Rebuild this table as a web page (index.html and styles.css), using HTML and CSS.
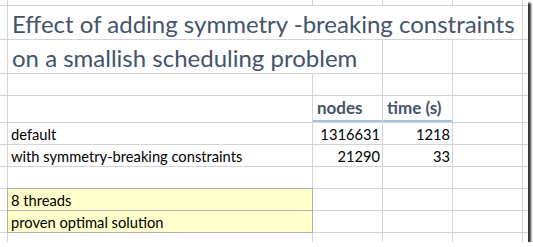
FILE: index.html
```html
<!DOCTYPE html>
<html>
<head>
<meta charset="utf-8">
<link rel="stylesheet" href="styles.css">
</head>
<body>
<div class="sheet">
  <!-- row 0 -->
  <div class="c"></div><div class="c"></div><div class="c"></div><div class="c"></div><div class="c"></div><div class="c"></div>
  <!-- row 1 -->
  <div class="c"></div><div class="c title span4">Effect of adding symmetry -breaking constraints</div><div class="c"></div>
  <!-- row 2 -->
  <div class="c"></div><div class="c title span2">on a smallish scheduling problem</div><div class="c"></div><div class="c"></div><div class="c"></div>
  <!-- row 3 -->
  <div class="c"></div><div class="c"></div><div class="c"></div><div class="c"></div><div class="c"></div><div class="c"></div>
  <!-- row 4 -->
  <div class="c"></div><div class="c"></div><div class="c head">nodes</div><div class="c head">time (s)</div><div class="c"></div><div class="c"></div>
  <!-- row 5 -->
  <div class="c"></div><div class="c txt">default</div><div class="c num">1316631</div><div class="c num">1218</div><div class="c"></div><div class="c"></div>
  <!-- row 6 -->
  <div class="c"></div><div class="c txt">with symmetry-breaking constraints</div><div class="c num">21290</div><div class="c num">33</div><div class="c"></div><div class="c"></div>
  <!-- row 7 -->
  <div class="c"></div><div class="c"></div><div class="c"></div><div class="c"></div><div class="c"></div><div class="c"></div>
  <!-- row 8 -->
  <div class="c"></div><div class="c txt note">8 threads</div><div class="c"></div><div class="c"></div><div class="c"></div><div class="c"></div>
  <!-- row 9 -->
  <div class="c"></div><div class="c txt note">proven optimal solution</div><div class="c"></div><div class="c"></div><div class="c"></div><div class="c"></div>
  <!-- row 10 -->
  <div class="c"></div><div class="c"></div><div class="c"></div><div class="c"></div><div class="c"></div><div class="c"></div>
</div>
</body>
</html>
```
FILE: styles.css
```css
html, body {
  margin: 0;
  padding: 0;
  background: #ffffff;
}

.sheet {
  width: 528px;
  height: 242px;
  display: grid;
  grid-template-columns: 7px 304px 69px 69px 69px 5px;
  grid-template-rows: 5px 33px 33px 21px 26px 21px 21px 21px 21px 21px 9px;
  gap: 1px;
  background: #d4d4d4;
  box-shadow: 3px 3px 2px #333333;
  overflow: hidden;
  font-family: Lato, "Open Sans", sans-serif;
}

.c {
  background: #ffffff;
  display: flex;
  align-items: flex-end;
  white-space: nowrap;
  overflow: visible;
  min-width: 0;
}

.span4 { grid-column: span 4; }
.span2 { grid-column: span 2; }

.title {
  font-size: 24px;
  font-weight: 400;
  color: #44546a;
  line-height: 28px;
  padding: 0 0 1px 4px;
}

.head {
  font-size: 17px;
  font-weight: 700;
  color: #44546a;
  line-height: 20px;
  padding: 0 0 2px 4px;
  border-bottom: 2px solid #a4c0e4;
}

.txt {
  font-size: 14.7px;
  color: #000000;
  line-height: 17px;
  padding: 0 0 1px 3px;
}

.num {
  font-size: 14.7px;
  color: #000000;
  line-height: 17px;
  padding: 0 2px 1px 0;
  justify-content: flex-end;
}

.note {
  background: #ffffcc;
  outline: 1px solid #b2b2b2;
}
```
